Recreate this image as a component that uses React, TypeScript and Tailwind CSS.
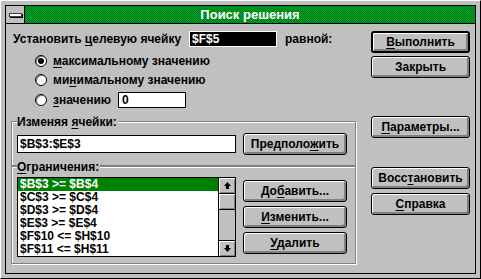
import React from 'react';

const U = ({ children }: { children: React.ReactNode }) => (
  <span className="underline decoration-1 underline-offset-[2px]">{children}</span>
);

const Btn = ({ children, def, className = '' }: { children: React.ReactNode; def?: boolean; className?: string }) => (
  <div
    className={`h-[22px] flex items-center justify-center rounded-[3px] bg-[#c0c0c0] border-black ${
      def ? 'border-2' : 'border'
    } shadow-[inset_1px_1px_0_#fff,inset_-2px_-2px_0_#808080] ${className}`}
  >
    <span className="leading-none">{children}</span>
  </div>
);

const Radio = ({ on }: { on?: boolean }) => (
  <div className="w-[12px] h-[12px] rounded-full border border-black bg-white flex items-center justify-center shadow-[inset_1px_1px_0_#808080]">
    {on && <div className="w-[6px] h-[6px] rounded-full bg-black" />}
  </div>
);

const Arrow = ({ down }: { down?: boolean }) => (
  <svg width="7" height="7" viewBox="0 0 7 7" className={down ? 'rotate-180' : ''}>
    <polygon points="3.5,0 7,4 0,4" fill="#000" />
    <rect x="2" y="4" width="3" height="3" fill="#000" />
  </svg>
);

const rules = ['$B$3 >= $B$4', '$C$3 >= $C$4', '$D$3 >= $D$4', '$E$3 >= $E$4', '$F$10 <= $H$10', '$F$11 <= $H$11'];

export default function App() {
  return (
    <div className="w-[481px] h-[279px] bg-[#c0c0c0] p-[4px] border border-t-white border-l-white border-r-black border-b-black font-['Liberation_Sans',Arial,sans-serif] font-bold text-[12px] text-black">
      <div className="h-full border border-black flex flex-col">
        {/* title */}
        <div className="h-[18px] flex border-b border-black shrink-0">
          <div className="w-[19px] border-r border-black flex items-center justify-center bg-[#c0c0c0]">
            <div className="w-[13px] h-[4px] bg-white border border-[#404040] shadow-[1px_1px_0_#000]" />
          </div>
          <div className="flex-1 flex items-center justify-center bg-[repeating-conic-gradient(#008000_0%_25%,#00a040_0%_50%)] bg-[length:2px_2px]">
            <span className="text-white text-[13px] leading-none">Поиск решения</span>
          </div>
        </div>

        <div className="flex flex-1">
          {/* left column */}
          <div className="ml-[5px] w-[345px] flex flex-col">
            <div className="mt-[7px] h-[16px] flex items-center">
              <span className="w-[178px] pl-[2px]">
                Установить <U>ц</U>елевую ячейку
              </span>
              <div className="w-[88px] h-[16px] border border-white bg-black text-white pl-[2px] flex items-center">$F$5</div>
              <span className="ml-[8px]">равной:</span>
            </div>

            <div className="mt-[6px] h-[16px] flex items-center pl-[24px] gap-[6px]">
              <Radio on />
              <span>
                <U>м</U>аксимальному значению
              </span>
            </div>
            <div className="mt-[3px] h-[16px] flex items-center pl-[24px] gap-[6px]">
              <Radio />
              <span>
                ми<U>н</U>имальному значению
              </span>
            </div>
            <div className="mt-[4px] h-[16px] flex items-center pl-[24px] gap-[6px]">
              <Radio />
              <span className="w-[59px]">
                <U>з</U>начению
              </span>
              <div className="w-[68px] h-[16px] border border-black bg-white pl-[3px] flex items-center">0</div>
            </div>

            {/* group 1 */}
            <div className="relative mt-[13px] h-[45px] border border-[#808080] shadow-[inset_1px_1px_0_#fff,1px_1px_0_#fff] flex items-center pl-[5px]">
              <span className="absolute -top-[7px] left-[5px] bg-[#c0c0c0] pr-[1px] leading-[14px]">
                Изменяя <U>я</U>чейки:
              </span>
              <div className="mt-[1px] w-[219px] h-[18px] border border-black bg-white pl-[2px] flex items-center">$B$3:$E$3</div>
              <Btn className="ml-[7px] w-[104px]">
                Предполо<U>ж</U>ить
              </Btn>
            </div>

            {/* group 2 */}
            <div className="relative h-[98px] border border-[#808080] shadow-[inset_1px_1px_0_#fff,1px_1px_0_#fff] flex items-start pl-[5px] pt-[10px]">
              <span className="absolute -top-[7px] left-[5px] bg-[#c0c0c0] pr-[1px] leading-[14px]">
                <U>О</U>граничения:
              </span>
              <div className="w-[219px] h-[80px] border border-black bg-white flex">
                <div className="flex-1 flex flex-col">
                  {rules.map((r, i) => (
                    <div
                      key={r}
                      className={`h-[13px] pl-[2px] leading-[13px] text-[12px] whitespace-pre ${
                        i === 0 ? 'bg-[#008000] text-white' : ''
                      }`}
                    >
                      {r}
                    </div>
                  ))}
                </div>
                <div className="w-[17px] border-l border-black flex flex-col bg-[#c0c0c0]">
                  <div className="h-[16px] border-b border-black flex items-center justify-center shadow-[inset_1px_1px_0_#fff,inset_-1px_-1px_0_#808080]">
                    <Arrow />
                  </div>
                  <div className="h-[16px] border-b border-black shadow-[inset_1px_1px_0_#fff,inset_-1px_-1px_0_#808080]" />
                  <div className="flex-1" />
                  <div className="h-[16px] border-t border-black flex items-center justify-center shadow-[inset_1px_1px_0_#fff,inset_-1px_-1px_0_#808080]">
                    <Arrow down />
                  </div>
                </div>
              </div>
              <div className="ml-[7px] w-[104px] flex flex-col gap-[4px] mt-[3px]">
                <Btn>
                  До<U>б</U>авить...
                </Btn>
                <Btn>
                  <U>И</U>зменить...
                </Btn>
                <Btn>
                  <U>У</U>далить
                </Btn>
              </div>
            </div>
          </div>

          {/* right column */}
          <div className="ml-[15px] w-[99px] flex flex-col">
            <Btn def className="mt-[7px]">
              <U>В</U>ыполнить
            </Btn>
            <Btn className="mt-[3px]">Закрыть</Btn>
            <Btn className="mt-[38px]">
              <U>П</U>араметры...
            </Btn>
            <Btn className="mt-[29px]">
              Восс<U>т</U>ановить
            </Btn>
            <Btn className="mt-[4px]">
              <U>С</U>правка
            </Btn>
          </div>
        </div>
      </div>
    </div>
  );
}
